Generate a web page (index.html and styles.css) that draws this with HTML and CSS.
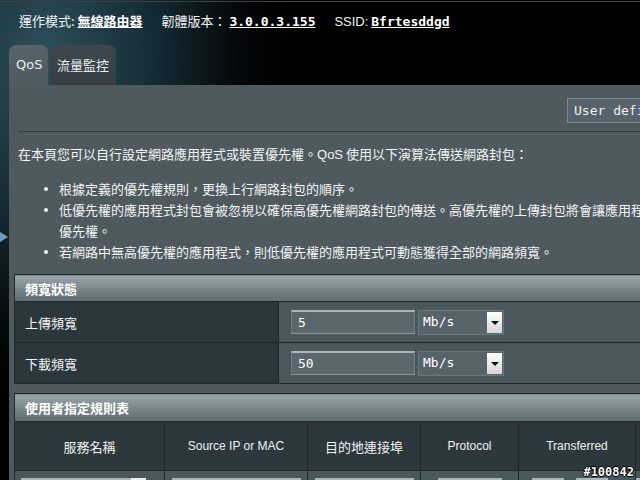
FILE: index.html
```html
<!DOCTYPE html>
<html lang="zh-Hant">
<head>
    <meta charset="UTF-8">
    <title>QoS</title>
    <link rel="stylesheet" href="styles.css">
</head>
<body>

    <div class="page">
        <div class="side-arrow"></div>

        <div class="topbar">
            <span class="info">運作模式: <span class="value">無線路由器</span></span>
            <span class="info">韌體版本： <span class="value mono">3.0.0.3.155</span></span>
            <span class="info"><span class="latin">SSID:</span> <span class="value mono">Bfrtesddgd</span></span>
        </div>

        <div class="tabs">
            <div class="tab active">QoS</div>
            <div class="tab">流量監控</div>
        </div>

        <div class="panel">
            <div class="mode-row">
                <div class="mode-select">User defined QoS</div>
            </div>

            <p class="desc">在本頁您可以自行設定網路應用程式或裝置優先權。<span class="latin">QoS</span> 使用以下演算法傳送網路封包：</p>
            <ul class="rules">
                <li>根據定義的優先權規則，更換上行網路封包的順序。</li>
                <li>低優先權的應用程式封包會被忽視以確保高優先權網路封包的傳送。高優先權的上傳封包將會讓應用程式獲得更高的優先權。</li>
                <li>若網路中無高優先權的應用程式，則低優先權的應用程式可動態獲得全部的網路頻寬。</li>
            </ul>

            <table class="form-table bandwidth">
                <tr><th colspan="2">頻寬狀態</th></tr>
                <tr>
                    <td class="label">上傳頻寬</td>
                    <td class="field">
                        <div class="field-row">
                            <div class="text-input">5</div>
                            <div class="unit-select">Mb/s<span class="arrow"></span></div>
                        </div>
                    </td>
                </tr>
                <tr>
                    <td class="label">下載頻寬</td>
                    <td class="field">
                        <div class="field-row">
                            <div class="text-input">50</div>
                            <div class="unit-select">Mb/s<span class="arrow"></span></div>
                        </div>
                    </td>
                </tr>
            </table>

            <table class="form-table rules-table">
                <colgroup>
                    <col class="c1"><col class="c2"><col class="c3"><col class="c4"><col class="c5"><col class="c6"><col>
                </colgroup>
                <tr><th colspan="7">使用者指定規則表</th></tr>
                <tr class="col-head">
                    <td>服務名稱</td>
                    <td class="latin">Source IP or MAC</td>
                    <td>目的地連接埠</td>
                    <td class="latin">Protocol</td>
                    <td class="latin">Transferred</td>
                    <td></td>
                    <td></td>
                </tr>
                <tr class="entry">
                    <td><div class="combo"><div class="box w1"></div><div class="btn"></div></div></td>
                    <td><div class="box w2"></div></td>
                    <td><div class="box w3"></div></td>
                    <td><div class="box w4"></div></td>
                    <td><div class="pair"><div class="box w5"></div><div class="box w5"></div></div></td>
                    <td><div class="box w2"></div></td>
                    <td></td>
                </tr>
            </table>
        </div>
    </div>

    <div class="watermark">#100842</div>

</body>
</html>
```

FILE: styles.css
```css
body {
    margin: 0;
    width: 640px;
    height: 480px;
    overflow: hidden;
    font-family: "Noto Sans CJK TC", "Liberation Sans", sans-serif;
    font-size: 13px;
    color: #f2f4f5;
    background-color: #000;
    background-image: radial-gradient(ellipse 240px 340px at 45px 60px, #2e505d 0%, #152c35 45%, #05090b 80%, #000 100%);
}

.page {
    position: relative;
    width: 800px;
    border-top: 1px solid #3c4245;
    margin-top: 1px;
}

.latin {
    font-family: "Liberation Sans", sans-serif;
}

.mono {
    font-family: "DejaVu Sans Mono", monospace;
}

/* top info line */
.topbar {
    height: 43px;
    padding: 11px 0 0 19px;
    box-sizing: border-box;
    line-height: 16px;
    white-space: nowrap;
}

.topbar .info {
    margin-right: 16px;
}

.topbar .value {
    font-weight: bold;
    text-decoration: underline;
    color: #fff;
}

/* tabs */
.tabs {
    display: flex;
    gap: 2px;
    margin-left: 9px;
    height: 40px;
}

.tab {
    padding: 0 7px;
    line-height: 40px;
    border-radius: 7px 7px 0 0;
    background: linear-gradient(#3e474c, #353e43);
    color: #e8ecee;
}

.tab.active {
    font-family: "DejaVu Sans", sans-serif;
    background: linear-gradient(#58636a, #4f5a5f);
    width: 25px;
}

/* content panel */
.panel {
    margin-left: 9px;
    width: 780px;
    background-color: #4f5a5f;
    padding-bottom: 20px;
}

.mode-row {
    display: flex;
    justify-content: flex-end;
    height: 47px;
    margin-left: 9px;
    padding: 13px 62px 0 0;
    box-sizing: border-box;
    border-bottom: 1px solid #2f383c;
}

.mode-select {
    width: 160px;
    height: 25px;
    box-sizing: border-box;
    border: 1px solid #7d898e;
    background-color: #56636a;
    padding-left: 6px;
    font-family: "DejaVu Sans Mono", monospace;
    line-height: 23px;
    color: #f0f0f0;
}

.desc {
    margin: 11px 0 0 9px;
    line-height: 21px;
}

.rules {
    margin: 13px 0 0 0;
    padding-left: 50px;
    width: 666px;
    line-height: 21px;
    list-style: none;
}

.rules li {
    position: relative;
}

.rules li::before {
    content: "";
    position: absolute;
    left: -15px;
    top: 9px;
    width: 4px;
    height: 4px;
    border-radius: 50%;
    background-color: #f4f4f4;
}

/* form tables */
.form-table {
    margin-left: 5px;
    width: 760px;
    border-collapse: collapse;
    border: 1px solid #1f292d;
}

.form-table th {
    height: 26px;
    padding: 0 0 0 10px;
    text-align: left;
    font-weight: bold;
    color: #fff;
    background: linear-gradient(#98a5ab, #5e6b71);
    border-bottom: 1px solid #1f292d;
}

.bandwidth {
    margin-top: 12px;
}

.bandwidth td {
    height: 38px;
    border-top: 1px solid #1f292d;
}

.bandwidth .label {
    width: 252px;
    padding-left: 10px;
    background-color: #2c373c;
    border-right: 1px solid #1f292d;
}

.bandwidth .field {
    padding-left: 12px;
    background-color: #4a575c;
}

.field-row {
    display: flex;
    gap: 3px;
}

.text-input {
    width: 124px;
    height: 24px;
    box-sizing: border-box;
    background-color: #5a676c;
    border: 1px solid #6f7d82;
    border-top: 2px solid #aab5b9;
    border-bottom-color: #8d999e;
    padding-left: 6px;
    font-family: "DejaVu Sans Mono", monospace;
    line-height: 21px;
    color: #fff;
}

.unit-select {
    position: relative;
    width: 86px;
    height: 25px;
    box-sizing: border-box;
    background-color: #566369;
    border: 1px solid #6b787d;
    padding-left: 4px;
    font-family: "DejaVu Sans Mono", monospace;
    line-height: 21px;
    color: #fff;
}

.unit-select .arrow {
    position: absolute;
    right: 1px;
    top: 1px;
    width: 15px;
    height: 21px;
    background: linear-gradient(#ffffff, #d6d6d6);
}

.unit-select .arrow::after {
    content: "";
    position: absolute;
    left: 4px;
    top: 9px;
    border-left: 4px solid transparent;
    border-right: 4px solid transparent;
    border-top: 4px solid #111;
}

.rules-table {
    margin-top: 9px;
    table-layout: fixed;
}

.rules-table th {
    height: 27px;
}

.c1 { width: 150px; }
.c2 { width: 143px; }
.c3 { width: 113px; }
.c4 { width: 98px; }
.c5 { width: 117px; }
.c6 { width: 100px; }

.col-head td {
    height: 48px;
    padding: 0;
    text-align: center;
    background-color: #2d383d;
    border-right: 1px solid #1f292d;
    color: #eef1f2;
    font-size: 13px;
}

.col-head td.latin {
    font-size: 12px;
}

.entry td {
    height: 40px;
    vertical-align: top;
    padding: 7px 0 0 0;
    background-color: #4a575c;
    border-top: 1px solid #1f292d;
    border-right: 1px solid #1f292d;
}

.entry .box {
    height: 22px;
    margin: 0 auto;
    background-color: #5a676c;
    border-top: 2px solid #aab5b9;
}

.combo {
    display: flex;
    margin-left: 6px;
}

.combo .btn {
    width: 15px;
    height: 22px;
    background-color: #eeeeee;
}

.combo .box {
    margin: 0;
}

.w1 { width: 110px; }
.w2 { width: 129px; }
.w3 { width: 99px; }
.w4 { width: 64px; }
.w5 { width: 32px; }

.pair {
    display: flex;
    gap: 12px;
    padding-left: 13px;
}

.pair .box {
    margin: 0;
}

/* left pointer of the menu */
.side-arrow {
    position: absolute;
    left: -3px;
    top: 228px;
    width: 0;
    height: 0;
    border-top: 7px solid transparent;
    border-bottom: 7px solid transparent;
    border-left: 11px solid #6f9cc0;
}

.watermark {
    position: absolute;
    right: 6px;
    bottom: 1px;
    font-family: "DejaVu Sans Mono", monospace;
    font-weight: bold;
    font-size: 12px;
    color: #fff;
    text-shadow: -1px 0 #000, 1px 0 #000, 0 -1px #000, 0 1px #000;
}
```
